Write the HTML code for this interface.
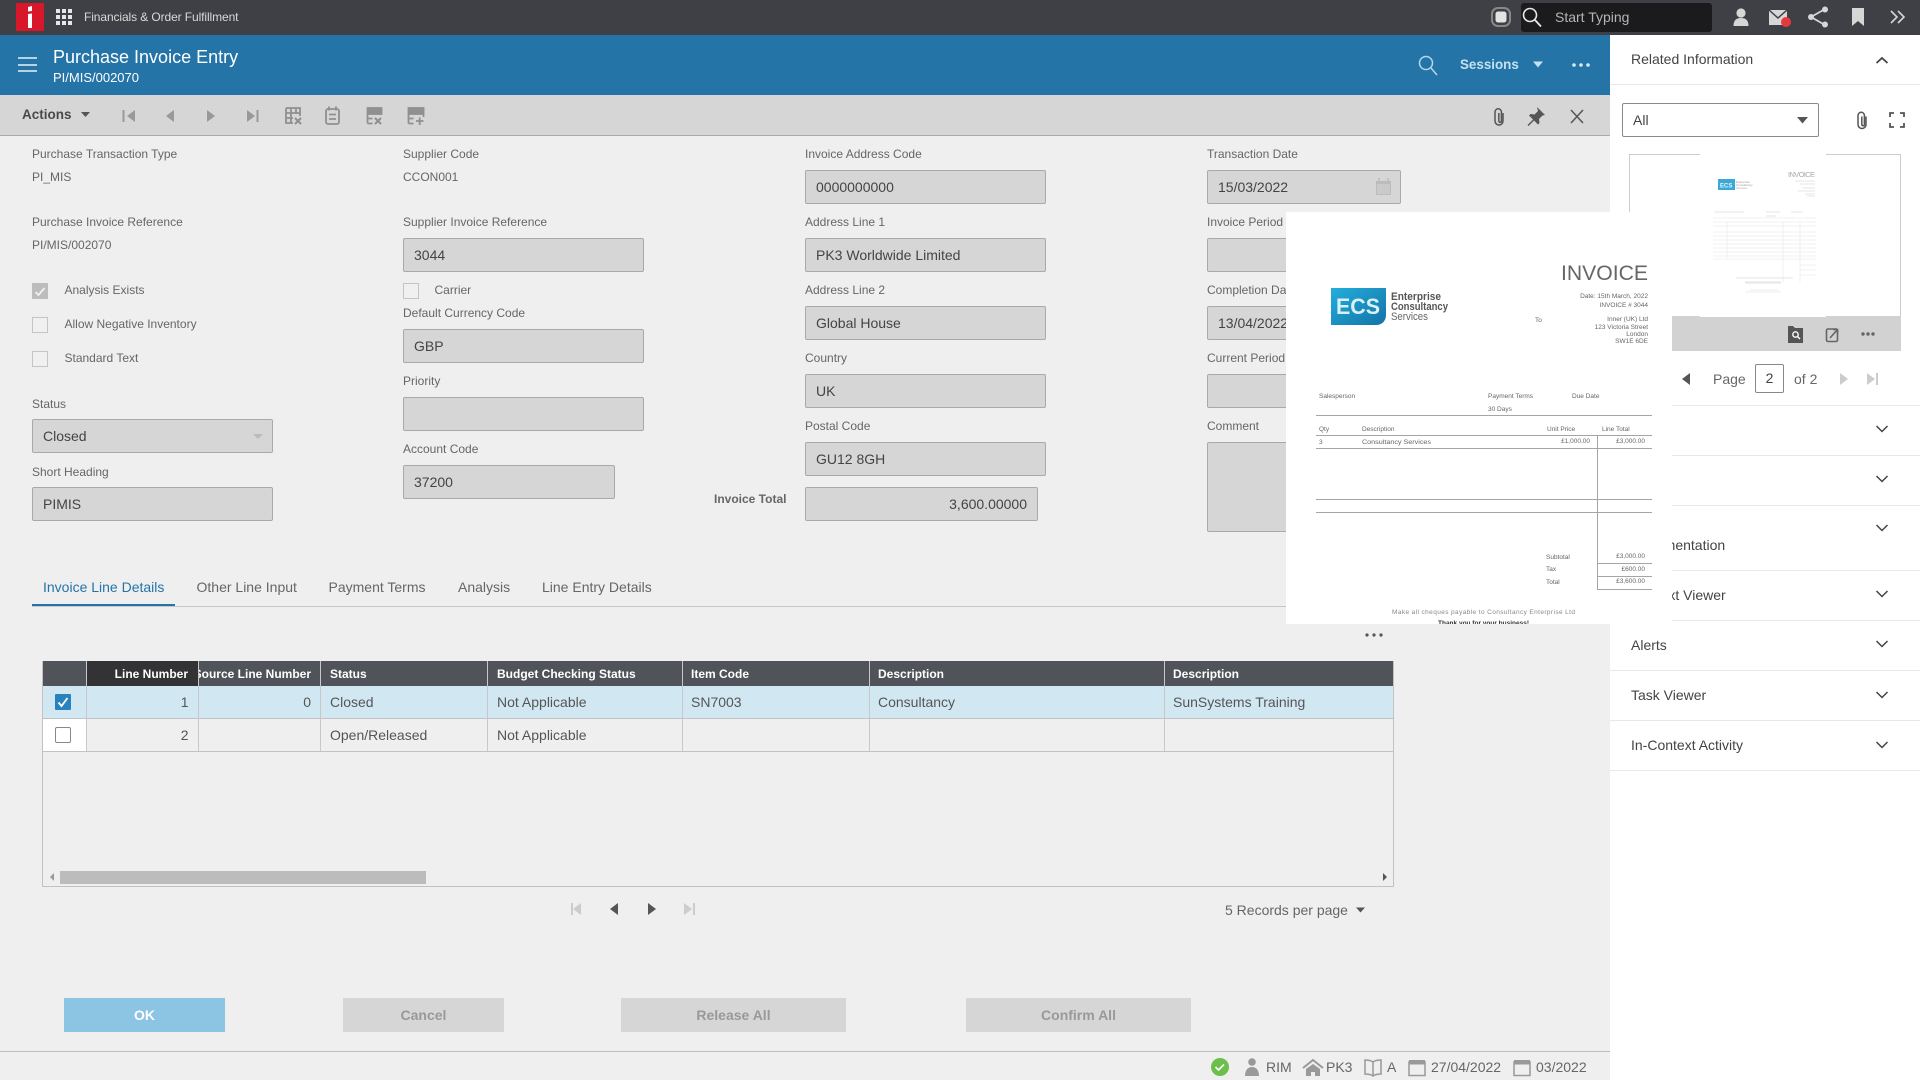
<!DOCTYPE html>
<html lang="en">
<head>
<meta charset="utf-8">
<title>Purchase Invoice Entry</title>
<style>
html,body{margin:0;padding:0;width:1920px;height:1080px;overflow:hidden;background:#efefef;font-family:"Liberation Sans",sans-serif;}
#root{position:relative;width:1920px;height:1080px;overflow:hidden;background:#efefef;}
.b{position:absolute;box-sizing:border-box;}
.t{position:absolute;white-space:nowrap;line-height:20px;height:20px;}
.l{font-size:12px;color:#666;}
.v{font-size:12px;color:#666;}
.i{position:absolute;box-sizing:border-box;height:34px;background:#d6d6d6;border:1px solid #a9a9a9;border-radius:2px;font-size:14px;color:#444;line-height:32px;padding-left:10px;white-space:nowrap;overflow:hidden;}
.cb{position:absolute;box-sizing:border-box;width:16px;height:16px;border:1px solid #c4c4c4;background:#f0f0f0;}
.tab{font-size:14px;color:#666;}
.th{position:absolute;top:662px;height:25px;line-height:25px;font-size:12px;font-weight:bold;color:#fff;white-space:nowrap;overflow:hidden;box-sizing:border-box;}
.td{position:absolute;height:32px;line-height:32px;font-size:14px;color:#555;white-space:nowrap;box-sizing:border-box;}
.btn{position:absolute;top:998px;height:34px;line-height:34px;text-align:center;font-size:14px;font-weight:bold;background:#d6d6d6;color:#999;}
.acc{position:absolute;left:1631px;font-size:14px;color:#444;line-height:20px;white-space:nowrap;}
.ln{position:absolute;left:1610px;width:310px;height:1px;background:#e8e8e8;}
</style>
</head>
<body>
<div id="root">

<!-- top bar -->
<div class="b" style="left:0;top:0;width:1920px;height:35px;background:#3f4046;"></div>
<div class="b" style="left:16px;top:3px;width:28px;height:28px;background:#d8182a;"></div>
<div class="t" style="left:84px;top:7px;font-size:12px;color:#d8d8d8;letter-spacing:-.1px;">Financials &amp; Order Fulfillment</div>
<div class="b" style="left:1521px;top:3px;width:191px;height:29px;background:#1b1b1d;border-radius:3px;"></div>
<div class="t" style="left:1555px;top:7px;font-size:14px;color:#b5b5b5;">Start Typing</div>

<!-- blue header -->
<div class="b" style="left:0;top:35px;width:1610px;height:60px;background:#2474a8;"></div>
<div class="t" style="left:53px;top:47px;font-size:18px;color:#fff;">Purchase Invoice Entry</div>
<div class="t" style="left:53px;top:68px;font-size:13px;color:#fff;">PI/MIS/002070</div>
<div class="t" style="left:1460px;top:55px;font-size:13.4px;font-weight:bold;color:#c4e0f1;">Sessions</div>

<!-- toolbar -->
<div class="b" style="left:0;top:95px;width:1610px;height:41px;background:#d6d6d6;border-bottom:1px solid #aaa;"></div>
<div class="t" style="left:22px;top:105px;font-size:13.5px;font-weight:bold;color:#4a4a4a;">Actions</div>

<!-- right panel -->
<div class="b" style="left:1610px;top:35px;width:310px;height:1045px;background:#fff;"></div>
<div class="t" style="left:1631px;top:49px;font-size:14px;color:#444;">Related Information</div>
<div class="ln" style="top:84px;"></div>
<div class="b" style="left:1622px;top:103px;width:197px;height:34px;border:1px solid #8a8a8a;border-radius:2px;background:#fff;font-size:14px;color:#444;line-height:32px;padding-left:10px;">All</div>
<div class="b" style="left:1629px;top:154px;width:272px;height:197px;border:1px solid #ccc;background:#fff;"></div>
<div class="b" style="left:1672px;top:316px;width:229px;height:35px;background:#d2d2d2;"></div>
<div class="t" style="left:1713px;top:369px;font-size:14px;color:#666;">Page</div>
<div class="b" style="left:1755px;top:364px;width:29px;height:29px;border:1px solid #888;border-radius:2px;background:#fff;font-size:14px;color:#444;line-height:27px;text-align:center;">2</div>
<div class="t" style="left:1794px;top:369px;font-size:14px;color:#666;">of 2</div>
<div class="ln" style="top:405px;"></div>
<div class="ln" style="top:455px;"></div>
<div class="ln" style="top:505px;"></div>
<div class="ln" style="top:570px;"></div>
<div class="ln" style="top:620px;"></div>
<div class="ln" style="top:670px;"></div>
<div class="ln" style="top:720px;"></div>
<div class="ln" style="top:770px;"></div>
<div class="acc" style="top:535px;">Documentation</div>
<div class="acc" style="top:585px;">Context Viewer</div>
<div class="acc" style="top:635px;">Alerts</div>
<div class="acc" style="top:685px;">Task Viewer</div>
<div class="acc" style="top:735px;">In-Context Activity</div>

<!-- form column 1 -->
<div class="t l" style="left:32px;top:144px;">Purchase Transaction Type</div>
<div class="t v" style="left:32px;top:167px;">PI_MIS</div>
<div class="t l" style="left:32px;top:212px;">Purchase Invoice Reference</div>
<div class="t v" style="left:32px;top:235px;">PI/MIS/002070</div>
<div class="cb" style="left:32px;top:283px;background:#bdbdbd;border-color:#bdbdbd;"></div>
<div class="t l" style="left:64.5px;top:280px;">Analysis Exists</div>
<div class="cb" style="left:32px;top:317px;"></div>
<div class="t l" style="left:64.5px;top:314px;">Allow Negative Inventory</div>
<div class="cb" style="left:32px;top:351px;"></div>
<div class="t l" style="left:64.5px;top:348px;">Standard Text</div>
<div class="t l" style="left:32px;top:394px;">Status</div>
<div class="i" style="left:32px;top:419px;width:241px;">Closed</div>
<div class="t l" style="left:32px;top:462px;">Short Heading</div>
<div class="i" style="left:32px;top:487px;width:241px;">PIMIS</div>

<!-- form column 2 -->
<div class="t l" style="left:403px;top:144px;">Supplier Code</div>
<div class="t v" style="left:403px;top:167px;">CCON001</div>
<div class="t l" style="left:403px;top:212px;">Supplier Invoice Reference</div>
<div class="i" style="left:403px;top:238px;width:241px;">3044</div>
<div class="cb" style="left:403px;top:283px;"></div>
<div class="t l" style="left:434.5px;top:280px;">Carrier</div>
<div class="t l" style="left:403px;top:303px;">Default Currency Code</div>
<div class="i" style="left:403px;top:329px;width:241px;">GBP</div>
<div class="t l" style="left:403px;top:371px;">Priority</div>
<div class="i" style="left:403px;top:397px;width:241px;"></div>
<div class="t l" style="left:403px;top:439px;">Account Code</div>
<div class="i" style="left:403px;top:465px;width:212px;">37200</div>

<!-- form column 3 -->
<div class="t l" style="left:805px;top:144px;">Invoice Address Code</div>
<div class="i" style="left:805px;top:170px;width:241px;">0000000000</div>
<div class="t l" style="left:805px;top:212px;">Address Line 1</div>
<div class="i" style="left:805px;top:238px;width:241px;">PK3 Worldwide Limited</div>
<div class="t l" style="left:805px;top:280px;">Address Line 2</div>
<div class="i" style="left:805px;top:306px;width:241px;">Global House</div>
<div class="t l" style="left:805px;top:348px;">Country</div>
<div class="i" style="left:805px;top:374px;width:241px;">UK</div>
<div class="t l" style="left:805px;top:416px;">Postal Code</div>
<div class="i" style="left:805px;top:442px;width:241px;">GU12 8GH</div>
<div class="t" style="left:714px;top:489px;font-size:12px;font-weight:bold;color:#666;">Invoice Total</div>
<div class="i" style="left:805px;top:487px;width:233px;text-align:right;padding-right:10px;">3,600.00000</div>

<!-- form column 4 -->
<div class="t l" style="left:1207px;top:144px;">Transaction Date</div>
<div class="i" style="left:1207px;top:170px;width:194px;">15/03/2022</div>
<div class="t l" style="left:1207px;top:212px;">Invoice Period</div>
<div class="i" style="left:1207px;top:238px;width:194px;"></div>
<div class="t l" style="left:1207px;top:280px;">Completion Date</div>
<div class="i" style="left:1207px;top:306px;width:194px;">13/04/2022</div>
<div class="t l" style="left:1207px;top:348px;">Current Period</div>
<div class="i" style="left:1207px;top:374px;width:194px;"></div>
<div class="t l" style="left:1207px;top:416px;">Comment</div>
<div class="i" style="left:1207px;top:442px;width:194px;height:90px;"></div>

<!-- tabs -->
<div class="t tab" style="left:43px;top:577px;color:#2474a8;">Invoice Line Details</div>
<div class="t tab" style="left:196.5px;top:577px;">Other Line Input</div>
<div class="t tab" style="left:328.5px;top:577px;">Payment Terms</div>
<div class="t tab" style="left:458px;top:577px;">Analysis</div>
<div class="t tab" style="left:542px;top:577px;">Line Entry Details</div>
<div class="b" style="left:32px;top:606px;width:1362px;height:1px;background:#c8c8c8;"></div>
<div class="b" style="left:32px;top:604px;width:143px;height:2px;background:#2474a8;"></div>

<!-- table -->
<div class="b" style="left:42px;top:661px;width:1352px;height:226px;border:1px solid #c2c2c2;background:#efefef;"></div>
<div class="b" style="left:43px;top:661px;width:1350px;height:25px;background:#50535a;"></div>
<div class="b" style="left:87px;top:661px;width:112px;height:25px;background:#333336;"></div>
<div class="b" style="left:43px;top:686px;width:1350px;height:33px;background:#d1e8f3;border-bottom:1px solid #c2c2c2;"></div>
<div class="b" style="left:43px;top:719px;width:1350px;height:33px;background:#efefef;border-bottom:1px solid #c2c2c2;"></div>
<div class="b" style="left:43px;top:719px;width:44px;height:33px;background:#fff;border-bottom:1px solid #c2c2c2;"></div>
<div class="b" style="left:86px;top:661px;width:1px;height:90px;background:#c8c8c8;"></div>
<div class="b" style="left:198px;top:661px;width:1px;height:90px;background:#c8c8c8;"></div>
<div class="b" style="left:320px;top:661px;width:1px;height:90px;background:#c8c8c8;"></div>
<div class="b" style="left:487px;top:661px;width:1px;height:90px;background:#c8c8c8;"></div>
<div class="b" style="left:682px;top:661px;width:1px;height:90px;background:#c8c8c8;"></div>
<div class="b" style="left:869px;top:661px;width:1px;height:90px;background:#c8c8c8;"></div>
<div class="b" style="left:1164px;top:661px;width:1px;height:90px;background:#c8c8c8;"></div>

<div class="th" style="left:87px;width:101px;text-align:right;">Line Number</div>
<div class="th" style="left:199px;width:112px;direction:rtl;text-align:right;">Source Line Number</div>
<div class="th" style="left:330px;">Status</div>
<div class="th" style="left:497px;">Budget Checking Status</div>
<div class="th" style="left:691px;">Item Code</div>
<div class="th" style="left:878px;">Description</div>
<div class="th" style="left:1173px;">Description</div>

<div class="td" style="left:87px;top:686px;width:101.500px;text-align:right;">1</div>
<div class="td" style="left:199px;top:686px;width:112px;text-align:right;">0</div>
<div class="td" style="left:330px;top:686px;">Closed</div>
<div class="td" style="left:497px;top:686px;">Not Applicable</div>
<div class="td" style="left:691px;top:686px;">SN7003</div>
<div class="td" style="left:878px;top:686px;">Consultancy</div>
<div class="td" style="left:1173px;top:686px;">SunSystems Training</div>
<div class="td" style="left:87px;top:719px;width:101.500px;text-align:right;">2</div>
<div class="td" style="left:330px;top:719px;">Open/Released</div>
<div class="td" style="left:497px;top:719px;">Not Applicable</div>

<div class="b" style="left:55px;top:694px;width:16px;height:16px;background:#2a82bd;border-radius:1px;"></div>
<div class="b" style="left:55px;top:727px;width:16px;height:16px;background:#fff;border:1px solid #888;border-radius:2px;"></div>
<div class="b" style="left:60px;top:871px;width:366px;height:13px;background:#bcbcbc;"></div>

<div class="t" style="left:1225px;top:900px;font-size:14px;color:#666;">5 Records per page</div>

<!-- buttons -->
<div class="btn" style="left:64px;width:161px;background:#8cc4e4;color:#fff;">OK</div>
<div class="btn" style="left:343px;width:161px;">Cancel</div>
<div class="btn" style="left:621px;width:225px;">Release All</div>
<div class="btn" style="left:966px;width:225px;">Confirm All</div>

<!-- status bar -->
<div class="b" style="left:0;top:1051px;width:1610px;height:1px;background:#bdbdbd;"></div>
<div class="t" style="left:1266px;top:1057px;font-size:14px;color:#666;">RIM</div>
<div class="t" style="left:1326px;top:1057px;font-size:14px;color:#666;">PK3</div>
<div class="t" style="left:1387px;top:1057px;font-size:14px;color:#666;">A</div>
<div class="t" style="left:1431px;top:1057px;font-size:14px;color:#666;">27/04/2022</div>
<div class="t" style="left:1536px;top:1057px;font-size:14px;color:#666;">03/2022</div>

<!-- icons -->
<svg class="b" style="left:0;top:0;" width="1920" height="1080" viewBox="0 0 1920 1080" fill="none">
  <!-- logo i -->
  <path d="M28 14l4-.5V28h-4z" fill="#fff"/><path d="M28 7l4-1v5l-4 .5z" fill="#fff"/>
  <!-- grid -->
  <g fill="#e6e6e6">
    <rect x="56" y="9" width="4" height="4"/><rect x="62" y="9" width="4" height="4"/><rect x="68" y="9" width="4" height="4"/>
    <rect x="56" y="15" width="4" height="4"/><rect x="62" y="15" width="4" height="4"/><rect x="68" y="15" width="4" height="4"/>
    <rect x="56" y="21" width="4" height="4"/><rect x="62" y="21" width="4" height="4"/><rect x="68" y="21" width="4" height="4"/>
  </g>
  <!-- top right -->
  <rect x="1492" y="8" width="18" height="18" rx="6" stroke="#888" stroke-width="2"/>
  <rect x="1495.5" y="11.5" width="11" height="11" rx="2.5" fill="#e4e4e4"/>
  <circle cx="1530" cy="15" r="6.500" stroke="#e8e8e8" stroke-width="1.600"/><path d="M1535 20l6 6.500" stroke="#e8e8e8" stroke-width="1.800"/>
  <circle cx="1741" cy="13" r="4.600" fill="#d6d6d6"/><path d="M1733.500 26c0-6 3-8 7.500-8s7.500 2 7.500 8z" fill="#d6d6d6"/>
  <path d="M1769 10h18v15h-18z" fill="#d6d6d6"/><path d="M1769 10l9 8 9-8" stroke="#3f4046" stroke-width="1.500"/>
  <circle cx="1786" cy="22" r="5" fill="#e8383f"/>
  <g stroke="#d6d6d6" stroke-width="1.800"><path d="M1811 17l14-8M1811 17l14 8"/></g>
  <circle cx="1811" cy="17" r="3" fill="#d6d6d6"/><circle cx="1825" cy="9.500" r="3" fill="#d6d6d6"/><circle cx="1825" cy="24.500" r="3" fill="#d6d6d6"/>
  <path d="M1852 8h12v18l-6-5-6 5z" fill="#d6d6d6"/>
  <path d="M1891 11l6 6-6 6M1898 11l6 6-6 6" stroke="#d6d6d6" stroke-width="1.600"/>
  <!-- header -->
  <path d="M18 58h19M18 65h19M18 71h19" stroke="#e6f1f8" stroke-width="1.400"/>
  <circle cx="1426" cy="63" r="6.500" stroke="#b5d6ea" stroke-width="1.500"/><path d="M1431 68l6 7" stroke="#b5d6ea" stroke-width="1.500"/>
  <path d="M1533 61.500h10l-5 6z" fill="#c4e0f1"/>
  <g fill="#d6e8f4"><circle cx="1574" cy="65" r="1.800"/><circle cx="1581" cy="65" r="1.800"/><circle cx="1588" cy="65" r="1.800"/></g>
  <!-- toolbar nav -->
  <path d="M81 112h9l-4.500 5z" fill="#555"/>
  <g fill="#999">
    <rect x="122.500" y="110" width="2" height="12"/><path d="M135 110v12l-8-6z"/>
    <path d="M174 110v12l-8-6z"/>
    <path d="M207 110v12l8-6z"/>
    <path d="M247 110v12l8-6z"/><rect x="256.500" y="110" width="2" height="12"/>
  </g>
  <!-- toolbar tool icons -->
  <g stroke="#909090" stroke-width="1.800">
    <path d="M286 108h14v8M286 108v15h7M286 113h14M286 118h7M291 108v15M296 108v6"/>
    <path d="M295 118l6 6M301 118l-6 6" stroke-width="2"/>
    <rect x="326" y="109" width="13" height="15" rx="2"/><path d="M329 106.500v4M336 106.500v4M329 114.500h7M329 119h7"/>
    <rect x="367.500" y="108" width="14" height="6" fill="#909090"/><path d="M367.500 114v9.500M367.500 118.500h5M367.500 123.500h5"/>
    <path d="M375 118l6 6M381 118l-6 6" stroke-width="2"/>
    <rect x="408.500" y="108" width="15" height="6" fill="#909090"/><path d="M408.500 114v9.500M408.500 118.500h5M408.500 123.500h5M423.500 108v9"/>
    <path d="M416 121h7.500M419.700 117.500v7.500"/>
  </g>
  <!-- toolbar right -->
  <path id="clipA" d="M1503 113v8a4 4 0 0 1-8 0v-9a3.200 3.200 0 0 1 6.400 0v9a1.300 1.300 0 0 1-2.600 0v-8" stroke="#555" stroke-width="1.500"/>
  <path d="M1537 107l8 8-2.500.5-3.500 3.500.5 4-1.500 1.500-4-4-5.500 5.500-1-1 5.500-5.500-4-4 1.500-1.500 4 .5 3.500-3.500z" fill="#555"/>
  <path d="M1571 110l12 13M1583 110l-12 13" stroke="#555" stroke-width="1.500"/>
  <!-- right panel icons -->
  <path d="M1876.500 63l5.500-5 5.500 5" stroke="#444" stroke-width="1.800"/>
  <path d="M1797 117h11l-5.500 6.500z" fill="#555"/>
  <path d="M1866 116.500v8a4 4 0 0 1-8 0v-9a3.200 3.200 0 0 1 6.400 0v9a1.300 1.300 0 0 1-2.600 0v-8" stroke="#555" stroke-width="1.500"/>
  <path d="M1890 117v-4h4M1900 113h4v4M1904 123v4h-4M1894 127h-4v-4" stroke="#555" stroke-width="1.800"/>
  <path d="M1788 326h5l2 2h8v15h-15z" fill="#555"/><circle cx="1795.500" cy="334.500" r="2.700" stroke="#fff" stroke-width="1.400"/><path d="M1797.500 336.500l2.500 2.500" stroke="#fff" stroke-width="1.400"/>
  <rect x="1826.500" y="329" width="11" height="12.500" rx="1.500" stroke="#666" stroke-width="1.600"/><path d="M1830 338l7-8M1833 329.500h4.500v4.500" stroke="#666" stroke-width="1.600"/>
  <g fill="#666"><circle cx="1863" cy="334" r="1.700"/><circle cx="1868" cy="334" r="1.700"/><circle cx="1873" cy="334" r="1.700"/></g>
  <path d="M1690 373v12l-8-6z" fill="#555"/>
  <path d="M1840 373v12l8-6z" fill="#ccc"/>
  <path d="M1867 373v12l8-6z" fill="#ccc"/><rect x="1876" y="373" width="2" height="12" fill="#ccc"/>
  <g stroke="#444" stroke-width="1.500" fill="none">
    <path d="M1876.500 426l5.500 5.500 5.500-5.500"/><path d="M1876.500 476l5.500 5.500 5.500-5.500"/><path d="M1876.500 525l5.500 5.500 5.500-5.500"/>
    <path d="M1876.500 591l5.500 5.500 5.500-5.500"/><path d="M1876.500 641l5.500 5.500 5.500-5.500"/><path d="M1876.500 692l5.500 5.500 5.500-5.500"/><path d="M1876.500 742l5.500 5.500 5.500-5.500"/>
  </g>
  <!-- form icons -->
  <path d="M35.500 292l3 3 6-7" stroke="#f0f0f0" stroke-width="1.800"/>
  <path d="M253 434h10l-5 5z" fill="#bbb"/>
  <rect x="1376.500" y="182" width="14" height="12.500" fill="#cacaca" stroke="#bcbcbc"/><rect x="1376" y="181" width="15" height="3" fill="#bcbcbc"/><path d="M1379 178v4M1388 178v4" stroke="#bcbcbc" stroke-width="1.500"/>
  <!-- grid dots, check, scroll arrows, pagination -->
  <g fill="#555"><circle cx="1367" cy="635" r="1.600"/><circle cx="1374" cy="635" r="1.600"/><circle cx="1381" cy="635" r="1.600"/></g>
  <path d="M58.500 702.500l3 3.500 6-8" stroke="#fff" stroke-width="1.800"/>
  <path d="M54 873v8l-4-4z" fill="#999"/>
  <path d="M1383 873v8l4-4z" fill="#555"/>
  <rect x="571" y="903" width="2" height="12" fill="#ccc"/><path d="M581 903v12l-8-6z" fill="#ccc"/>
  <path d="M618 903v12l-8-6z" fill="#555"/>
  <path d="M648 903v12l8-6z" fill="#555"/>
  <path d="M684 903v12l8-6z" fill="#ccc"/><rect x="693" y="903" width="2" height="12" fill="#ccc"/>
  <path d="M1356 907.500h9l-4.500 5z" fill="#555"/>
  <!-- status bar -->
  <circle cx="1220" cy="1067" r="9" fill="#6cc04a"/><path d="M1215.500 1067l3 3 5.500-5.500" stroke="#fff" stroke-width="1.600"/>
  <circle cx="1252" cy="1062" r="3.800" fill="#999"/><path d="M1245 1076c0-6 3-9 7-9s7 3 7 9z" fill="#999"/>
  <path d="M1303 1068l10-8 10 8" stroke="#999" stroke-width="2"/><path d="M1306 1069l7-5 7 5v7h-5v-4h-4v4h-5z" fill="#999"/>
  <path d="M1373 1062c-2-1.500-5-2-8-2v14c3 0 6 .5 8 2 2-1.500 5-2 8-2v-14c-3 0-6 .5-8 2zM1373 1062v14" stroke="#999" stroke-width="1.500"/>
  <rect x="1409" y="1062" width="16" height="13.500" stroke="#999" stroke-width="1.500"/><rect x="1409" y="1060" width="16" height="4.500" fill="#999"/>
  <rect x="1514" y="1062" width="16" height="13.500" stroke="#999" stroke-width="1.500"/><rect x="1514" y="1060" width="16" height="4.500" fill="#999"/>
</svg>

<!-- thumbnail page -->
<svg class="b" style="left:1700px;top:150px;" width="126" height="167" viewBox="1700 150 126 167">
  <rect x="1700" y="150" width="126" height="167" fill="#fff"/>
  <text x="1788" y="177" font-family="Liberation Sans" font-size="7.500" fill="#aaa" textLength="27">INVOICE</text>
  <rect x="1718" y="179" width="17" height="11" fill="#3aa9d6"/>
  <text x="1720" y="187.500" font-family="Liberation Sans" font-size="6" font-weight="bold" fill="#e8f6fc">ECS</text>
  <text x="1736" y="183" font-family="Liberation Sans" font-size="3" fill="#999">Enterprise</text>
  <text x="1736" y="186" font-family="Liberation Sans" font-size="3" fill="#999">Consultancy</text>
  <text x="1736" y="189" font-family="Liberation Sans" font-size="3" fill="#aaa">Services</text>
  <g stroke="#e6e6e6" stroke-width=".6" fill="none">
    <path d="M1795 181h20M1800 184h15M1803 188h12M1798 191h17M1805 194h10M1807 196h8" stroke="#ccc"/>
    <path d="M1714 212h30M1766 212h14M1791 212h12M1766 216h10" stroke="#ccc"/>
    <path d="M1713 218h103M1713 222h103M1713 226h103M1713 232h103M1713 236h103M1713 240h103M1713 244h103M1713 248h103M1713 252h103M1713 256h103M1713 259h103"/>
    <path d="M1783 222v60M1800 222v60M1727 222v37M1800 265h16M1800 270h16M1800 275h16"/>
    <path d="M1736 278h57M1745 282h36M1745 283h36" stroke="#ccc"/>
    <path d="M1750 290h28M1745 292h36" stroke="#ddd"/>
  </g>
</svg>

<!-- invoice preview overlay -->
<svg class="b" style="left:1286px;top:212px;" width="386" height="412" viewBox="1286 212 386 412" font-family="Liberation Sans">
  <defs>
    <linearGradient id="g" x1="0" y1="0" x2="1" y2="1"><stop offset="0" stop-color="#23aedb"/><stop offset="1" stop-color="#1473a8"/></linearGradient>
    <clipPath id="c"><rect x="1286" y="212" width="386" height="412"/></clipPath>
  </defs>
  <rect x="1286" y="212" width="386" height="412" fill="#fff"/>
  <g clip-path="url(#c)">
  <text x="1561" y="280" font-size="21" fill="#666" textLength="87" lengthAdjust="spacingAndGlyphs">INVOICE</text>
  <path d="M1331 288h55v27c0 6-4 10-10 10h-45z" fill="url(#g)"/>
  <text x="1336" y="314" font-size="22" font-weight="bold" fill="#d9f1fa" textLength="44" lengthAdjust="spacingAndGlyphs">ECS</text>
  <text x="1391" y="300" font-size="11" font-weight="bold" fill="#555" textLength="50" lengthAdjust="spacingAndGlyphs">Enterprise</text>
  <text x="1391" y="310" font-size="11" font-weight="bold" fill="#555" textLength="57" lengthAdjust="spacingAndGlyphs">Consultancy</text>
  <text x="1391" y="320" font-size="11" fill="#666" textLength="37" lengthAdjust="spacingAndGlyphs">Services</text>
  <g font-size="6.500" fill="#666">
    <text x="1648" y="298" text-anchor="end">Date: 15th March, 2022</text>
    <text x="1648" y="307" text-anchor="end">INVOICE # 3044</text>
    <text x="1648" y="321" text-anchor="end">Inner (UK) Ltd</text>
    <text x="1648" y="329" text-anchor="end">123 Victoria Street</text>
    <text x="1648" y="336" text-anchor="end">London</text>
    <text x="1648" y="343" text-anchor="end">SW1E 6DE</text>
    <text x="1535" y="322">To</text>
    <text x="1319" y="398">Salesperson</text>
    <text x="1488" y="398">Payment Terms</text>
    <text x="1572" y="398">Due Date</text>
    <text x="1488" y="411">30 Days</text>
    <text x="1319" y="431">Qty</text>
    <text x="1362" y="431">Description</text>
    <text x="1547" y="431">Unit Price</text>
    <text x="1602" y="431">Line Total</text>
    <text x="1319" y="444">3</text>
    <text x="1362" y="444" textLength="69" lengthAdjust="spacingAndGlyphs">Consultancy Services</text>
    <text x="1590" y="443" text-anchor="end">£1,000.00</text>
    <text x="1645" y="443" text-anchor="end">£3,000.00</text>
    <text x="1546" y="559">Subtotal</text>
    <text x="1546" y="571">Tax</text>
    <text x="1546" y="584">Total</text>
    <text x="1645" y="558" text-anchor="end">£3,000.00</text>
    <text x="1645" y="571" text-anchor="end">£600.00</text>
    <text x="1645" y="583" text-anchor="end">£3,600.00</text>
    <text x="1392" y="614" textLength="183" fill="#888">Make all cheques payable to Consultancy Enterprise Ltd</text>
    <text x="1438" y="625" font-weight="bold" fill="#333" textLength="91">Thank you for your business!</text>
  </g>
  <g stroke="#a5a5a5" stroke-width="1">
    <path d="M1316 415.500h336M1316 435.500h336M1316 448.500h336M1316 499.500h336M1316 512.500h336"/>
    <path d="M1597.500 435v154M1597 563.500h55M1597 576.500h55M1597 589.500h55"/>
  </g>
  </g>
</svg>

</div>
</body>
</html>
